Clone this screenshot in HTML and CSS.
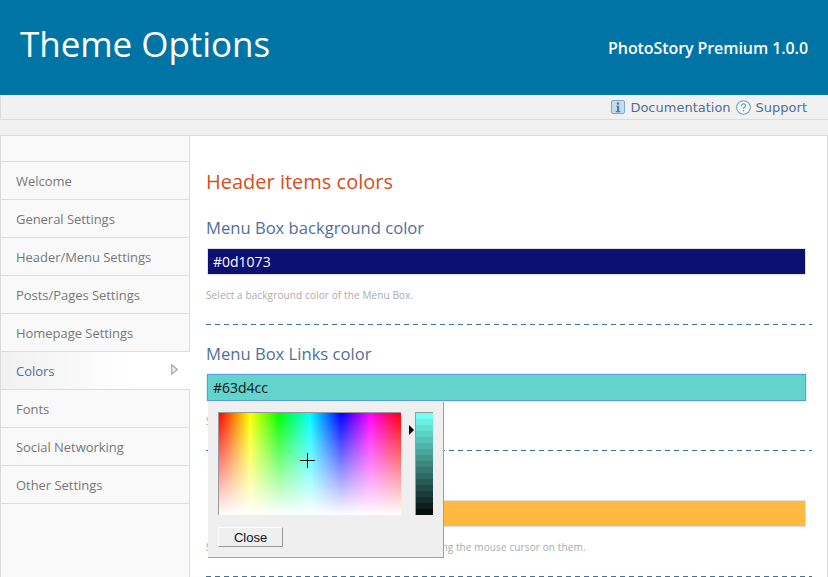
FILE: index.html
```html
<!DOCTYPE html>
<html lang="en">
<head>
<meta charset="utf-8">
<title>Theme Options</title>
<link rel="stylesheet" href="styles.css">
</head>
<body>
<header class="masthead">
  <h1 class="masthead-title">Theme Options</h1>
  <div class="masthead-version">PhotoStory Premium 1.0.0</div>
</header>
<nav class="toolbar">
  <a class="toolbar-link">
    <svg class="toolbar-icon" viewBox="0 0 14 14" width="14" height="14"><rect x="0.5" y="0.5" width="13" height="13" rx="1.5" fill="#c5dcef" stroke="#7ea9cc"/><circle cx="7" cy="3.6" r="1.3" fill="#4d7ea6"/><path d="M5.4 5.8h2.8v5.2h1.2v1.2H4.8V11H6V7H5.4z" fill="#4d7ea6"/></svg>
    Documentation
  </a>
  <a class="toolbar-link">
    <svg class="toolbar-icon" viewBox="0 0 15 15" width="15" height="15"><circle cx="7.5" cy="7.5" r="6.8" fill="#f4f8fb" stroke="#6f9ec6" stroke-width="1.1"/><path d="M5.4 5.9c0-1.3 1-2 2.1-2s2.1.7 2.1 1.9c0 1.5-2.1 1.5-2.1 3.1" fill="none" stroke="#6f9ec6" stroke-width="1.2"/><rect x="6.9" y="10" width="1.3" height="1.4" fill="#6f9ec6"/></svg>
    Support
  </a>
</nav>
<main class="panel">
  <ul class="side-menu">
    <li class="side-item">Welcome</li>
    <li class="side-item">General Settings</li>
    <li class="side-item">Header/Menu Settings</li>
    <li class="side-item">Posts/Pages Settings</li>
    <li class="side-item">Homepage Settings</li>
    <li class="side-item side-item-active">Colors
      <svg class="side-arrow" viewBox="0 0 7 11" width="7" height="11"><path d="M.7.7l5.6 4.8L.7 10.3z" fill="#ececec" stroke="#aaa" stroke-width="1.2"/></svg>
    </li>
    <li class="side-item">Fonts</li>
    <li class="side-item">Social Networking</li>
    <li class="side-item">Other Settings</li>
  </ul>
  <section class="content">
    <h2 class="content-title">Header items colors</h2>
    <div class="field">
      <h3 class="field-label">Menu Box background color</h3>
      <div class="swatch swatch-navy">#0d1073</div>
      <p class="field-hint">Select a background color of the Menu Box.</p>
    </div>
    <div class="field">
      <h3 class="field-label">Menu Box Links color</h3>
      <div class="swatch swatch-teal">#63d4cc</div>
      <p class="field-hint">Select a color of the links in the Menu Box.</p>
    </div>
    <div class="field field-covered">
      <h3 class="field-label">Menu Box Links hover</h3>
      <div class="swatch swatch-amber">#ffb840</div>
      <p class="field-hint">Select a color for the Menu Box links when hovering the mouse cursor on them.</p>
    </div>
    <div class="picker">
      <div class="picker-top">
        <div class="picker-field"><div class="picker-cross"></div></div>
        <div class="picker-arrow"></div>
        <div class="picker-strip"></div>
      </div>
      <button class="picker-close">Close</button>
    </div>
  </section>
</main>
</body>
</html>
```
FILE: styles.css
```css
* { box-sizing: border-box; }
html, body { height: 100%; }
body {
  margin: 0;
  overflow: hidden;
  background: #f1f1f1;
  font-family: "Open Sans", sans-serif;
}
.masthead {
  height: 95px;
  background: #0074a5;
  color: #fff;
  display: flex;
  align-items: center;
  justify-content: space-between;
  padding: 0 20px;
}
.masthead-title {
  margin: 0 0 8px;
  font-size: 35px;
  font-weight: 400;
  letter-spacing: -.05px;
  line-height: 1.2;
}
.masthead-version {
  font-size: 16px;
  font-weight: 600;
  letter-spacing: -.08px;
  margin-top: 1px;
}
.toolbar {
  height: 25px;
  border-left: 1px solid #dcdcdc;
  border-bottom: 1px solid #dcdcdc;
  display: flex;
  justify-content: flex-end;
  align-items: center;
  gap: 5px;
  padding-right: 21px;
  margin-bottom: 15px;
}
.toolbar-link {
  display: flex;
  align-items: center;
  gap: 5px;
  font-family: "DejaVu Sans", sans-serif;
  font-size: 13px;
  color: #4f6f99;
}
.toolbar-icon { flex: none; }
.panel {
  display: flex;
  height: 460px;
  background: #fff;
  border: 1px solid #dcdcdc;
  border-bottom: 0;
}
.side-menu {
  flex: none;
  width: 189px;
  margin: 0;
  padding: 25px 0 0;
  list-style: none;
  background: #f9f9f9;
  border-right: 1px solid #dcdcdc;
}
.side-item {
  height: 38px;
  padding-left: 15px;
  display: flex;
  align-items: center;
  font-size: 13px;
  letter-spacing: -.04px;
  color: #777;
  border-top: 1px solid #dcdcdc;
}
.side-item:last-child { height: 39px; border-bottom: 1px solid #dcdcdc; }
.side-item-active {
  width: 189px;
  color: #4f6f99;
  background: linear-gradient(to right, #f1f1f1, #fff 70%);
  justify-content: space-between;
  padding-right: 12px;
}
.side-arrow { margin-top: -3px; }
.content {
  flex: 1;
  padding: 32px 15px 0 16px;
  position: relative;
}
.content-title {
  margin: 0 0 3px;
  font-size: 20px;
  font-weight: 400;
  line-height: 28px;
  color: #d54e21;
}
.field {
  height: 126px;
  padding-top: 18px;
  background: repeating-linear-gradient(to right, #3f7199 0 5px, transparent 5px 9px) left bottom / 100% 1px no-repeat;
}
.field-label {
  margin: 0 0 9px;
  font-size: 16.6px;
  font-weight: 400;
  line-height: 22px;
  color: #4f6f99;
}
.field-covered .field-label { padding-left: 4px; }
.swatch {
  height: 27px;
  width: 599px;
  margin-left: 1px;
  padding-left: 5px;
  border: 1px solid #dfdfdf;
  font-size: 14px;
  line-height: 25px;
}
.swatch-navy { background: #0d1073; color: #fff; }
.swatch-teal { background: #63d4cc; color: #111; border-color: #5b9dd9; box-shadow: 0 0 2px rgba(30,140,190,.4); }
.swatch-amber { background: #ffb840; color: #111; width: 598px; margin-left: 2px; }
.field-hint {
  margin: 13px 0 0;
  font-size: 10px;
  line-height: 14px;
  letter-spacing: .12px;
  color: #aaa;
}
.picker {
  position: absolute;
  left: 18px;
  top: 266px;
  width: 236px;
  height: 156px;
  padding: 10px;
  background: #efefef;
  border-right: 1px solid #a0a0a0;
  border-bottom: 1px solid #a0a0a0;
}
.picker-top { display: flex; align-items: flex-start; }
.picker-field {
  position: relative;
  width: 183px;
  height: 103px;
  border-left: 1px solid #999;
  border-top: 1px solid #999;
  background:
    linear-gradient(to bottom, rgba(255,255,255,0), #fff),
    linear-gradient(to right, #f00, #ff0 17%, #0f0 33%, #0ff 50%, #00f 67%, #f0f 83%, #f00);
}
.picker-cross {
  position: absolute;
  left: 81px;
  top: 40px;
  width: 15px;
  height: 15px;
  background:
    linear-gradient(#000, #000) center / 15px 1px no-repeat,
    linear-gradient(#000, #000) center / 1px 15px no-repeat;
}
.picker-arrow {
  width: 0;
  height: 0;
  margin: 13px 1px 0 8px;
  border-left: 5px solid #000;
  border-top: 5px solid transparent;
  border-bottom: 5px solid transparent;
}
.picker-strip {
  width: 18px;
  height: 103px;
  border-left: 1px solid #999;
  border-top: 1px solid #999;
  background: linear-gradient(to bottom,
    #6ffff0 0 6px, #69f0e2 6px 12px, #62e1d4 12px 18px, #5bd2c6 18px 24px,
    #55c3b8 24px 30px, #4eb4a9 30px 36px, #48a59b 36px 42px, #41968d 42px 48px,
    #3b877f 48px 54px, #347871 54px 60px, #2e6963 60px 66px, #275a55 66px 72px,
    #214b47 72px 78px, #1a3c38 78px 84px, #142d2a 84px 90px, #0d1e1c 90px 96px,
    #070f0e 96px 102px);
}
.picker-close {
  display: block;
  width: 65px;
  height: 20px;
  margin-top: 12px;
  padding: 0;
  background: #efefef;
  border: 1px solid;
  border-color: #fff #999 #999 #fff;
  font-family: "Liberation Sans", sans-serif;
  font-size: 13px;
  color: #111;
}
```
